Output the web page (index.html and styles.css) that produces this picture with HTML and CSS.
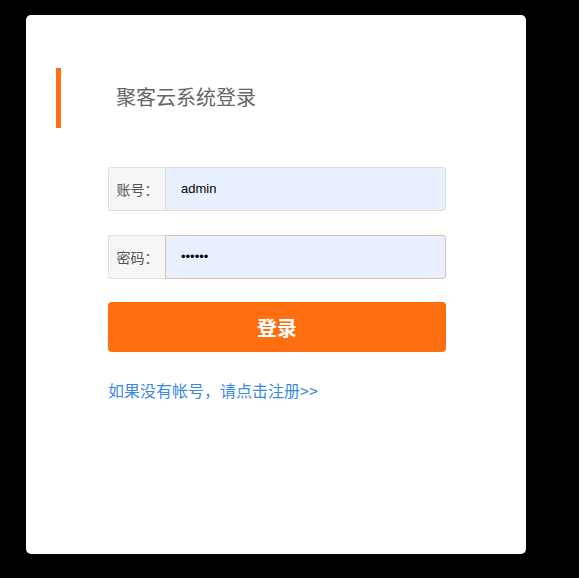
FILE: index.html
```html
<!DOCTYPE html>
<html lang="zh">
<head>
<meta charset="utf-8">
<title>聚客云系统登录</title>
<link rel="stylesheet" href="styles.css">
</head>
<body>
<div class="card">
  <div class="head">
    <span class="bar"></span>
    <h1 class="title">聚客云系统登录</h1>
  </div>
  <form class="form">
    <div class="group">
      <span class="addon">账号：</span>
      <input class="field" type="text" value="admin">
    </div>
    <div class="group">
      <span class="addon">密码：</span>
      <input class="field field-focus" type="password" value="123456">
    </div>
    <button class="btn" type="button">登录</button>
    <a class="reg" href="#">如果没有帐号，请点击注册&gt;&gt;</a>
  </form>
</div>
</body>
</html>
```
FILE: styles.css
```css
html, body {
  margin: 0;
  padding: 0;
  background: #000;
  height: 100%;
}
body {
  font-family: "Noto Sans CJK SC", "Liberation Sans", sans-serif;
}
.card {
  box-sizing: border-box;
  margin: 15px 0 0 26px;
  width: 500px;
  height: 539px;
  background: #fff;
  border-radius: 5px;
  padding: 53px 0 0 30px;
}
.head {
  display: flex;
  align-items: center;
  height: 60px;
}
.bar {
  width: 5px;
  height: 60px;
  background: #ff6e13;
}
.title {
  margin: -3px 0 0 55px;
  font-size: 20px;
  font-weight: normal;
  color: #666;
  line-height: 1;
}
.form {
  margin: 39px 0 0 52px;
  width: 338px;
  display: flex;
  flex-direction: column;
}
.group {
  display: flex;
  height: 44px;
  margin-bottom: 24px;
}
.group + .btn { margin-top: -1px; }
.addon {
  box-sizing: border-box;
  width: 57px;
  display: flex;
  align-items: center;
  justify-content: center;
  background: #f7f6f6;
  border: 1px solid #e2e2e2;
  border-right: 0;
  border-radius: 3px 0 0 3px;
  font-size: 14px;
  color: #555;
  padding-left: 1px;
  padding-bottom: 1px;
}
.field {
  box-sizing: border-box;
  flex: 1;
  height: 44px;
  margin: 0;
  border: 1px solid #dcdcdc;
  border-radius: 0 3px 3px 0;
  background: #e8f0fe;
  padding: 0 0 2px 15px;
  font-family: "Liberation Sans", Arial, sans-serif;
  font-size: 13px;
  color: #000;
  outline: none;
}
.field-focus {
  border-color: #dcbfae;
}
.btn {
  height: 50px;
  border: 0;
  border-radius: 4px;
  background: #ff6e11;
  color: #fff;
  font-family: "Noto Sans CJK SC", sans-serif;
  font-size: 20px;
  font-weight: bold;
  padding: 0;
  cursor: pointer;
}
.reg {
  margin-top: 27px;
  font-size: 16px;
  color: #3c8ae0;
  text-decoration: none;
  line-height: 22px;
}
```
